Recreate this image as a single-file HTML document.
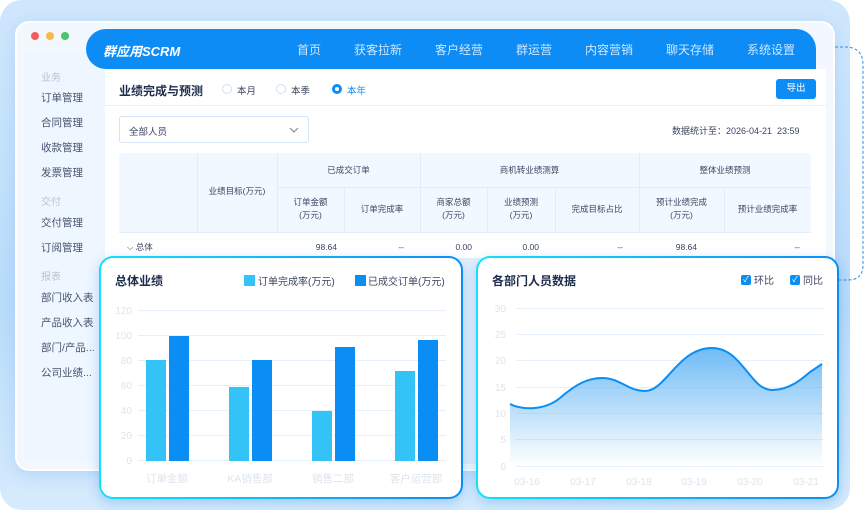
<!DOCTYPE html>
<html><head><meta charset="utf-8"><style>
*{margin:0;padding:0;box-sizing:border-box}
body{width:864px;height:510px;overflow:hidden;background:#fff;font-family:"Liberation Sans","Noto Sans CJK SC",sans-serif;position:relative}
.abs{position:absolute}
.bg{left:0;top:0;width:850px;height:510px;border-radius:22px;background:linear-gradient(180deg,#cfe7fd 0%,#b9dcfb 60%,#d6ebfd 100%)}
.win{left:15px;top:21px;width:820px;height:450px;border-radius:14px;background:#f3f8fe;border:2px solid #fff;box-shadow:0 4px 14px rgba(100,160,230,.25)}
.dot{width:8px;height:8px;border-radius:50%;top:32px}
.side{left:25px;top:51px;width:90px;height:410px;border-radius:10px;background:#eef6ff}
.side div{position:absolute;left:16px;font-size:10.5px;color:#4a5470}
.side .g{color:#b8c2d2;font-size:10px}
.nav{left:86px;top:29px;width:730px;height:40px;background:#0d8cf5;border-radius:20px 20px 0 20px}
.nav span{position:absolute;top:12px;font-size:12px;color:#cfe6ff}
.content{left:105px;top:69px;width:721px;height:395px;background:#fff}
.tbl{left:119px;top:153px;width:692px;height:105px;background:#f2f8ff;border-radius:4px;font-size:8.5px;color:#3c4660}
.tbl .c{position:absolute;text-align:center;line-height:13px}
.vl{position:absolute;width:1px;background:#e2edf9}
.hl{position:absolute;height:1px;background:#e2edf9}
.card{border-radius:14px;padding:2px;background:linear-gradient(90deg,#13e0fd,#0b8ef3);box-shadow:0 4px 12px rgba(40,130,230,.3)}
.card>div{width:100%;height:100%;background:#fff;border-radius:12px;position:relative}
.ttl{font-size:12px;font-weight:bold;color:#1f2d4d}
</style></head><body>
<div class="abs bg"></div>
<svg class="abs" style="left:810px;top:45px" width="54" height="250"><path d="M5 2 H35 Q53 2 53 20 V220 Q53 235 38 235 H20" fill="none" stroke="#2b8ee8" stroke-dasharray="3 2" stroke-width="1"/></svg>
<div class="abs win"></div>
<div class="abs dot" style="left:31px;background:#f65b5b"></div>
<div class="abs dot" style="left:46px;background:#f8b84a"></div>
<div class="abs dot" style="left:61px;background:#47c76b"></div>
<div class="abs side">
<div class="g" style="top:18px">业务</div>
<div style="top:39px">订单管理</div>
<div style="top:64px">合同管理</div>
<div style="top:89px">收款管理</div>
<div style="top:114px">发票管理</div>
<div class="g" style="top:142px">交付</div>
<div style="top:164px">交付管理</div>
<div style="top:189px">订阅管理</div>
<div class="g" style="top:217px">报表</div>
<div style="top:239px">部门收入表</div>
<div style="top:264px">产品收入表</div>
<div style="top:289px">部门/产品...</div>
<div style="top:314px">公司业绩...</div>
</div>
<div class="abs content"></div>
<div class="abs nav">
<span style="left:17px;color:#fff;font-weight:bold;font-size:13px;top:12px;font-style:italic">群应用SCRM</span>
<span style="left:211px">首页</span><span style="left:268px">获客拉新</span><span style="left:349px">客户经营</span><span style="left:430px">群运营</span><span style="left:499px">内容营销</span><span style="left:580px">聊天存储</span><span style="left:661px">系统设置</span>
</div>
<div class="abs" style="left:105px;top:105px;width:721px;height:1px;background:#e8f0fa"></div>
<div class="abs ttl" style="left:119px;top:82px;font-size:12px">业绩完成与预测</div>
<div class="abs" style="left:222px;top:84px;width:10px;height:10px;border-radius:50%;border:1px solid #cfe0f5"></div>
<div class="abs" style="left:237px;top:83px;font-size:9.5px;color:#3c4660">本月</div>
<div class="abs" style="left:276px;top:84px;width:10px;height:10px;border-radius:50%;border:1px solid #cfe0f5"></div>
<div class="abs" style="left:291px;top:83px;font-size:9.5px;color:#3c4660">本季</div>
<div class="abs" style="left:332px;top:84px;width:10px;height:10px;border-radius:50%;border:3px solid #0d8cf5"></div>
<div class="abs" style="left:347px;top:83px;font-size:9.5px;color:#0d8cf5">本年</div>
<div class="abs" style="left:776px;top:79px;width:40px;height:20px;border-radius:3px;background:#0d8cf5;color:#fff;font-size:9.5px;text-align:center;line-height:20px">导出</div>
<div class="abs" style="left:119px;top:116px;width:190px;height:27px;border:1px solid #d4e4f7;border-radius:3px;font-size:9.5px;color:#3c4660;padding:7px 9px">全部人员<svg style="position:absolute;right:9px;top:10px" width="10" height="6"><path d="M1 1 L5 5 L9 1" fill="none" stroke="#7a869c"/></svg></div>
<div class="abs" style="left:672px;top:124px;font-size:9px;color:#3c4660">数据统计至：2026-04-21&nbsp;&nbsp;23:59</div>
<div class="abs tbl">
<div class="hl" style="left:158px;right:0;top:34px"></div>
<div class="hl" style="left:0;right:0;top:79px"></div>
<div class="vl" style="left:78px;top:0;height:105px"></div>
<div class="vl" style="left:158px;top:0;height:105px"></div>
<div class="vl" style="left:225px;top:34px;height:71px"></div>
<div class="vl" style="left:301px;top:0;height:105px"></div>
<div class="vl" style="left:368px;top:34px;height:71px"></div>
<div class="vl" style="left:436px;top:34px;height:71px"></div>
<div class="vl" style="left:520px;top:0;height:105px"></div>
<div class="vl" style="left:605px;top:34px;height:71px"></div>
<div class="c" style="left:78px;width:80px;top:32px">业绩目标(万元)</div>
<div class="c" style="left:158px;width:143px;top:11px">已成交订单</div>
<div class="c" style="left:301px;width:219px;top:11px">商机转业绩测算</div>
<div class="c" style="left:520px;width:172px;top:11px">整体业绩预测</div>
<div class="c" style="left:158px;width:67px;top:43px">订单金额<br>(万元)</div>
<div class="c" style="left:225px;width:76px;top:50px">订单完成率</div>
<div class="c" style="left:301px;width:67px;top:43px">商家总额<br>(万元)</div>
<div class="c" style="left:368px;width:68px;top:43px">业绩预测<br>(万元)</div>
<div class="c" style="left:436px;width:84px;top:50px">完成目标占比</div>
<div class="c" style="left:520px;width:85px;top:43px">预计业绩完成<br>(万元)</div>
<div class="c" style="left:605px;width:87px;top:50px">预计业绩完成率</div>
<div style="position:absolute;left:0;right:0;top:80px;height:25px;background:#fff"></div>
<div class="c" style="left:8px;top:88px">⌵ 总体</div>
<div class="c" style="left:158px;width:60px;top:88px;text-align:right">98.64</div>
<div class="c" style="left:225px;width:60px;top:88px;text-align:right">--</div>
<div class="c" style="left:301px;width:52px;top:88px;text-align:right">0.00</div>
<div class="c" style="left:368px;width:52px;top:88px;text-align:right">0.00</div>
<div class="c" style="left:436px;width:68px;top:88px;text-align:right">--</div>
<div class="c" style="left:520px;width:58px;top:88px;text-align:right">98.64</div>
<div class="c" style="left:605px;width:76px;top:88px;text-align:right">--</div>
</div>
<div class="abs" style="left:105px;top:258px;width:721px;height:206px;background:#e4eefa"></div>

<div class="abs card" style="left:99px;top:256px;width:364px;height:243px"><div>
<div class="abs ttl" style="left:14px;top:14px">总体业绩</div>
<div class="abs" style="left:143px;top:17px;width:11px;height:11px;background:#33c3f7"></div>
<div class="abs" style="left:157px;top:15px;font-size:10px;color:#3c4660">订单完成率(万元)</div>
<div class="abs" style="left:254px;top:17px;width:11px;height:11px;background:#0b8ef3"></div>
<div class="abs" style="left:267px;top:15px;font-size:10px;color:#3c4660">已成交订单(万元)</div>
<svg class="abs" style="left:0;top:0" width="360" height="240">
<g stroke="#e6f0fb" stroke-width="1">
<line x1="37" x2="345" y1="52.5" y2="52.5"/><line x1="37" x2="345" y1="77.5" y2="77.5"/><line x1="37" x2="345" y1="102.5" y2="102.5"/><line x1="37" x2="345" y1="127.5" y2="127.5"/><line x1="37" x2="345" y1="152.5" y2="152.5"/><line x1="37" x2="345" y1="177.5" y2="177.5"/><line x1="37" x2="345" y1="202.5" y2="202.5"/></g>
<g font-size="10" fill="#dde4ee" text-anchor="end" font-family="Liberation Sans"><text x="31" y="56">120</text><text x="31" y="81">100</text><text x="31" y="106">80</text><text x="31" y="131">60</text><text x="31" y="156">40</text><text x="31" y="181">20</text><text x="31" y="206">0</text></g>
<g fill="#33c3f7"><rect x="45" y="102" width="20" height="101"/><rect x="128" y="129" width="20" height="74"/><rect x="211" y="153" width="20" height="50"/><rect x="294" y="113" width="20" height="90"/></g>
<g fill="#0b8ef3"><rect x="68" y="78" width="20" height="125"/><rect x="151" y="102" width="20" height="101"/><rect x="234" y="89" width="20" height="114"/><rect x="317" y="82" width="20" height="121"/></g>
<g font-size="10.5" fill="#dde4ee" text-anchor="middle" font-family="Liberation Sans,Noto Sans CJK SC"><text x="66" y="224">订单金额</text><text x="149" y="224">KA销售部</text><text x="232" y="224">销售二部</text><text x="315" y="224">客户运营部</text></g>
</svg>
</div></div>

<div class="abs card" style="left:476px;top:256px;width:363px;height:243px"><div>
<div class="abs ttl" style="left:14px;top:14px">各部门人员数据</div>
<div class="abs" style="left:263px;top:17px;width:10px;height:10px;background:#0b8ef3;border-radius:2px;color:#fff;font-size:8px;line-height:10px;text-align:center">✓</div>
<div class="abs" style="left:276px;top:14px;font-size:10px;color:#3c4660">环比</div>
<div class="abs" style="left:312px;top:17px;width:10px;height:10px;background:#0b8ef3;border-radius:2px;color:#fff;font-size:8px;line-height:10px;text-align:center">✓</div>
<div class="abs" style="left:325px;top:14px;font-size:10px;color:#3c4660">同比</div>
<svg class="abs" style="left:0;top:0" width="360" height="240">
<defs><linearGradient id="ga" x1="0" y1="0" x2="0" y2="1"><stop offset="0" stop-color="#5fb4f5" stop-opacity=".9"/><stop offset="1" stop-color="#5fb4f5" stop-opacity="0"/></linearGradient></defs>
<g stroke="#e6f0fb" stroke-width="1">
<line x1="38" x2="346" y1="50.5" y2="50.5"/><line x1="38" x2="346" y1="76.5" y2="76.5"/><line x1="38" x2="346" y1="102.5" y2="102.5"/><line x1="38" x2="346" y1="129.5" y2="129.5"/><line x1="38" x2="346" y1="155.5" y2="155.5"/><line x1="38" x2="346" y1="181.5" y2="181.5"/><line x1="38" x2="346" y1="208.5" y2="208.5"/></g>
<g font-size="10" fill="#dde4ee" text-anchor="end" font-family="Liberation Sans"><text x="28" y="54">30</text><text x="28" y="80">25</text><text x="28" y="106">20</text><text x="28" y="133">15</text><text x="28" y="159">10</text><text x="28" y="185">5</text><text x="28" y="212">0</text></g>
<path d="M32 146 C44 152 66 153 82 140 C98 126 110 120 124 120 C142 120 150 133 167 133 C188 133 200 90 234 90 C264 90 272 132 294 132 C312 132 325 120 332 114 L344 106 L344 208 L32 208 Z" fill="url(#ga)"/>
<path d="M32 146 C44 152 66 153 82 140 C98 126 110 120 124 120 C142 120 150 133 167 133 C188 133 200 90 234 90 C264 90 272 132 294 132 C312 132 325 120 332 114 L344 106" fill="none" stroke="#0b8ef3" stroke-width="2"/>
<g font-size="10" fill="#dde4ee" text-anchor="middle" font-family="Liberation Sans"><text x="49" y="227">03-16</text><text x="105" y="227">03-17</text><text x="161" y="227">03-18</text><text x="216" y="227">03-19</text><text x="272" y="227">03-20</text><text x="328" y="227">03-21</text></g>
</svg>
</div></div>
</body></html>
